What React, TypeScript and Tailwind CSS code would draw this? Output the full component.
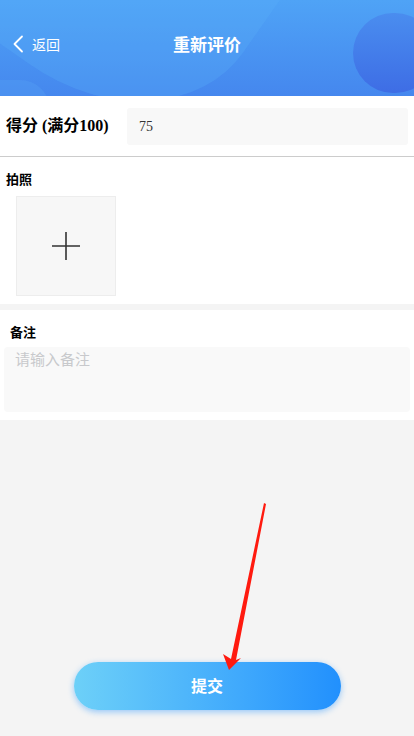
import React from "react";

export default function App() {
  return (
    <div className="relative w-[414px] h-[736px] overflow-hidden bg-[#f4f4f4] flex flex-col" style={{ fontFamily: '"Noto Sans CJK SC", "Noto Sans", sans-serif' }}>
      {/* Header */}
      <div className="relative h-[96px] shrink-0 overflow-hidden bg-gradient-to-b from-[#4fa3f6] to-[#4587ee]">
        <div className="absolute left-[-120px] top-[-260px] w-[420px] h-[330px] rotate-[35deg] bg-[#5aaef8] opacity-30 rounded-[40%]" />
        <div className="absolute left-[353px] top-[13px] w-[82px] h-[80px] rounded-full bg-gradient-to-b from-[#4a8def] to-[#3e6de5]" />
        <div className="absolute left-[-30px] top-[80px] w-[80px] h-[60px] rounded-full bg-[#58a6f6] opacity-30" />
        <div className="relative h-full flex items-center px-[12px] pb-[8px]">
          <div className="flex items-center gap-[8px] text-white">
            <svg width="12" height="18" viewBox="0 0 12 18" fill="none">
              <path d="M10 1.5 L2.5 9 L10 16.5" stroke="white" strokeWidth="1.8" strokeLinecap="round" strokeLinejoin="round" />
            </svg>
            <span className="text-[14px] leading-none">返回</span>
          </div>
          <div className="absolute inset-0 pb-[8px] flex items-center justify-center text-white text-[17px] font-bold">重新评价</div>
        </div>
      </div>

      {/* Score row */}
      <div className="bg-white h-[61px] flex items-center pl-[6px] pr-[6px] border-b border-[#cccccc] shrink-0">
        <div className="w-[121px] text-[16px] font-bold text-black" style={{ fontFamily: '"Liberation Serif", "Noto Sans CJK SC", serif' }}>得分 (满分100)</div>
        <div className="flex-1 h-[37px] bg-[#f8f8f8] rounded-[3px] flex items-center pl-[12px] text-[14px] text-[#333]" style={{ fontFamily: '"Liberation Serif", serif' }}>75</div>
      </div>

      {/* Photo */}
      <div className="bg-white pt-[13px] pb-[8px] shrink-0">
        <div className="pl-[6px] text-[13px] font-bold text-black leading-[18px]">拍照</div>
        <div className="ml-[16px] mt-[8px] w-[100px] h-[100px] bg-[#f7f7f7] border border-[#ededed] flex items-center justify-center">
          <svg width="30" height="30" viewBox="0 0 30 30">
            <path d="M15 1 V29 M1 15 H29" stroke="#333" strokeWidth="1.6" />
          </svg>
        </div>
      </div>

      {/* Remark */}
      <div className="bg-white mt-[6px] pt-[13px] pb-[8px] px-[4px] shrink-0">
        <div className="pl-[6px] text-[13px] font-bold text-black leading-[18px]">备注</div>
        <div className="mt-[6px] h-[65px] bg-[#f9f9f9] rounded-[4px] pl-[11px] pt-[1px] text-[15px] text-[#c8c9cc]">请输入备注</div>
      </div>

      <div className="flex-1 flex flex-col justify-end items-center pb-[26px]">
        <button className="w-[267px] h-[48px] rounded-full bg-gradient-to-r from-[#6dd0f8] to-[#2190fd] text-white text-[16px] font-bold shadow-[0_2px_6px_rgba(33,144,253,0.45)] pb-[3px]">提交</button>
      </div>

      {/* Red arrow annotation */}
      <svg className="absolute left-0 top-0 pointer-events-none" width="414" height="736" viewBox="0 0 414 736">
        <path d="M264 503 L266 504 L236 660 L241 658 L229 670 L223 654 L231 659 Z" fill="#ff1a0f" />
      </svg>
    </div>
  );
}
